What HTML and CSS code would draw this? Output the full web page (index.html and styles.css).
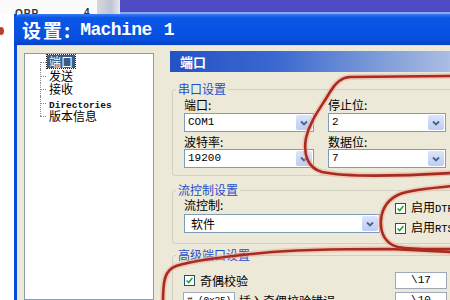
FILE: index.html
```html
<!DOCTYPE html>
<html lang="zh">
<head>
<meta charset="utf-8">
<title>设置: Machine 1</title>
<link rel="stylesheet" href="styles.css">
</head>
<body>
<div class="page">
  <div class="topstrip">
    <div class="ts-white"><span class="frag">OPP</span><span class="frag2">4</span></div>
    <div class="ts-gray"></div>
    <div class="ts-purple"></div>
  </div>
  <div class="window">
    <div class="titlebar"><span class="title-cjk">设置:</span><span class="title-lat">Machine 1</span></div>
    <div class="wbody">
      <div class="tree">
        <ul class="tree-list">
          <li><span class="node selected">端口</span></li>
          <li><span class="node">发送</span></li>
          <li><span class="node">接收</span></li>
          <li><span class="node mono">Directories</span></li>
          <li><span class="node">版本信息</span></li>
        </ul>
      </div>
      <div class="panel">
        <div class="phead">端口</div>

        <fieldset class="group g1">
          <legend>串口设置</legend>
          <div class="cols">
            <div class="col">
              <div class="lbl">端口:</div>
              <div class="combo"><span class="cval">COM1</span><span class="cbtn"><svg viewBox="0 0 10 10" width="10" height="10"><path d="M2 3.5 L5 6.5 L8 3.5" fill="none" stroke="#4d6185" stroke-width="1.8"/></svg></span></div>
              <div class="lbl lbl2">波特率:</div>
              <div class="combo"><span class="cval">19200</span><span class="cbtn"><svg viewBox="0 0 10 10" width="10" height="10"><path d="M2 3.5 L5 6.5 L8 3.5" fill="none" stroke="#4d6185" stroke-width="1.8"/></svg></span></div>
            </div>
            <div class="col">
              <div class="lbl">停止位:</div>
              <div class="combo"><span class="cval">2</span><span class="cbtn"><svg viewBox="0 0 10 10" width="10" height="10"><path d="M2 3.5 L5 6.5 L8 3.5" fill="none" stroke="#4d6185" stroke-width="1.8"/></svg></span></div>
              <div class="lbl lbl2">数据位:</div>
              <div class="combo"><span class="cval">7</span><span class="cbtn"><svg viewBox="0 0 10 10" width="10" height="10"><path d="M2 3.5 L5 6.5 L8 3.5" fill="none" stroke="#4d6185" stroke-width="1.8"/></svg></span></div>
            </div>
          </div>
        </fieldset>

        <fieldset class="group g2">
          <legend>流控制设置</legend>
          <div class="flowrow">
            <div class="flowcol">
              <div class="lbl">流控制:</div>
              <div class="combo wide"><span class="cval cjk">软件</span><span class="cbtn"><svg viewBox="0 0 10 10" width="10" height="10"><path d="M2 3.5 L5 6.5 L8 3.5" fill="none" stroke="#4d6185" stroke-width="1.8"/></svg></span></div>
            </div>
            <div class="checks">
              <div class="chk"><span class="box"><svg viewBox="0 0 11 11" width="9" height="9"><path d="M2 5.5 L4.5 8 L9 2.5" fill="none" stroke="#21a121" stroke-width="1.8"/></svg></span><span class="ctext">启用<span class="mono">DTR</span></span></div>
              <div class="chk"><span class="box"><svg viewBox="0 0 11 11" width="9" height="9"><path d="M2 5.5 L4.5 8 L9 2.5" fill="none" stroke="#21a121" stroke-width="1.8"/></svg></span><span class="ctext">启用<span class="mono">RTS</span></span></div>
            </div>
          </div>
        </fieldset>

        <fieldset class="group g3">
          <legend>高级端口设置</legend>
          <div class="adv">
            <div class="chk"><span class="box"><svg viewBox="0 0 11 11" width="9" height="9"><path d="M2 5.5 L4.5 8 L9 2.5" fill="none" stroke="#21a121" stroke-width="1.8"/></svg></span><span class="ctext">奇偶校验</span></div>
            <div class="field">\17</div>
            <div class="advleft"><div class="field small">#&nbsp;(0x25)</div><span class="ctext">插入奇偶校验错误</span></div>
            <div class="field">\10</div>
          </div>
        </fieldset>
      </div>
    </div>
  </div>

  <svg class="annot" viewBox="0 0 450 300" width="450" height="300">
    <g fill="none" stroke-linecap="round" stroke-linejoin="round">
      <g stroke="#f2b0a4" stroke-width="6" opacity="0.55">
        <path d="M452 76 L350 77 C342 77 336 82 330 92 C322 106 310 120 306 138 C303 155 308 168 322 172 C345 177 400 176 452 173"/>
        <path d="M452 186 C430 188 410 190 400 194 C388 199 382 208 381 220 C380 234 386 244 398 247 C415 250 435 249 452 249"/>
        <path d="M452 252 L390 249 C340 249 290 250 262 253 C230 256 195 260 176 266 C165 270 163 280 163 302"/>
      </g>
      <g stroke="#a52c1f" stroke-width="2.6">
        <path d="M452 76 L350 77 C342 77 336 82 330 92 C322 106 310 120 306 138 C303 155 308 168 322 172 C345 177 400 176 452 173"/>
        <path d="M452 186 C430 188 410 190 400 194 C388 199 382 208 381 220 C380 234 386 244 398 247 C415 250 435 249 452 249"/>
        <path d="M452 252 L390 249 C340 249 290 250 262 253 C230 256 195 260 176 266 C165 270 163 280 163 302"/>
      </g>
      <ellipse cx="1" cy="31" rx="3" ry="4" fill="#b8402c" stroke="none"/>
    </g>
  </svg>
</div>
</body>
</html>
```

FILE: styles.css
```css
* { box-sizing: border-box; }
html, body { margin: 0; padding: 0; }
body {
  width: 450px;
  height: 300px;
  overflow: hidden;
  background: #ffffff;
  font-family: "Noto Sans CJK SC", "Liberation Sans", sans-serif;
  font-size: 12px;
  color: #000;
}
.page {
  position: relative;
  width: 450px;
  height: 300px;
  overflow: hidden;
}
.topstrip {
  display: flex;
  height: 14px;
}
.ts-white {
  width: 97px;
  background: #fbfbfb;
  position: relative;
  overflow: hidden;
}
.frag {
  position: absolute;
  left: 15px;
  top: 9px;
  font: bold 10px/10px "Liberation Sans", sans-serif;
  color: #333;
  letter-spacing: 1px;
}
.frag2 {
  position: absolute;
  left: 84px;
  top: 8px;
  font: bold 10px/10px "Liberation Sans", sans-serif;
  color: #333;
}
.ts-gray {
  width: 23px;
  background: linear-gradient(90deg, #d8d8dc, #bfc4d4 60%, #e8e8ec);
}
.ts-purple {
  flex: 1;
  background: #5049c4;
  border-bottom: 2px solid #8aa6ec;
}
.window {
  margin-left: 14px;
  width: 460px;
  border-left: 3px solid #0a4ad8;
}
.titlebar {
  height: 31px;
  margin-left: -3px;
  padding-left: 8px;
  border-top-left-radius: 7px;
  background: linear-gradient(180deg, #3b7cf2 0, #0a56e6 12%, #0650e0 80%, #0440c6 100%);
  color: #fff;
  display: flex;
  align-items: center;
  font-weight: bold;
  font-size: 19px;
  white-space: nowrap;
}
.title-cjk {
  font-family: "Noto Sans CJK SC", sans-serif;
  letter-spacing: 2px;
  margin-right: 8px;
}
.title-lat {
  font-family: "Liberation Mono", monospace;
  font-size: 18px;
  letter-spacing: -0.6px;
  word-spacing: 2px;
}
.wbody {
  height: 255px;
  background: #ece9d8;
  display: flex;
  gap: 16px;
  padding: 5px 0 0 7px;
  border-top: 1px solid #d8dff0;
}
.tree {
  width: 130px;
  flex: none;
  margin-top: 2px;
  background: #fff;
  border: 1px solid #8d9aa8;
}
.tree-list {
  list-style: none;
  margin: 1px 0 0 15px;
  padding: 0;
}
.tree-list li {
  position: relative;
  height: 13.5px;
  line-height: 13px;
  padding-left: 7px;
}
.tree-list li::before {
  content: "";
  position: absolute;
  left: 0;
  top: 7px;
  width: 6px;
  border-top: 1px dotted #8a8a8a;
}
.tree-list li::after {
  content: "";
  position: absolute;
  left: 0;
  top: 0;
  height: 14px;
  border-left: 1px dotted #8a8a8a;
}
.tree-list li:first-child::after { top: 7px; height: 7px; }
.tree-list li:last-child::after { height: 7px; }
.node {
  display: inline-block;
  padding: 0 2px;
  font-size: 12px;
  line-height: 13px;
}
.node.selected {
  background: #3c5a86;
  color: #fff;
  outline: 1px dotted #222;
}
.mono {
  font-family: "Liberation Mono", "DejaVu Sans Mono", monospace;
}
.node.mono {
  font-size: 9.5px;
  font-weight: bold;
  color: #111;
}
.panel {
  width: 300px;
  flex: none;
}
.phead {
  height: 21px;
  background: linear-gradient(90deg, #2452c4 0, #3a68d0 35%, #7e9cd8 70%, #b7c7e6 100%);
  color: #fff;
  font-weight: bold;
  font-size: 13px;
  line-height: 21px;
  padding-left: 10px;
}
.group {
  margin: 0 0 0 2px;
  border: 1px solid #d3d0c0;
  border-radius: 3px;
  padding: 2px 0 7px 11px;
  min-width: 0;
}
.group legend {
  padding: 0 2px;
  margin-left: -8px;
  color: #1f4fc6;
  font-size: 12px;
  line-height: 14px;
}
.g1 { margin-top: 10px; }
.g2 { margin-top: 7px; padding-top: 1px; padding-bottom: 8px; }
.g3 { margin-top: 4px; padding-top: 10px; padding-bottom: 20px; }
.cols {
  display: grid;
  grid-template-columns: 130px 118px;
  column-gap: 14px;
}
.lbl {
  line-height: 14px;
  height: 14px;
  font-size: 12px;
  margin-bottom: 1px;
}
.lbl2 { margin-top: 3px; margin-bottom: 0; }
.combo {
  height: 19px;
  background: #fff;
  border: 1px solid #7f9db9;
  display: flex;
  align-items: stretch;
}
.cval {
  flex: 1;
  font-family: "Liberation Mono", monospace;
  font-size: 11px;
  line-height: 17px;
  padding-left: 3px;
}
.cval.cjk {
  font-family: "Noto Sans CJK SC", sans-serif;
  font-size: 12px;
  padding-left: 6px;
}
.cbtn {
  width: 16px;
  margin: 1px;
  background: linear-gradient(180deg, #dbe5fb, #bccdf4);
  border-radius: 2px;
  display: flex;
  align-items: center;
  justify-content: center;
}
.g2 .lbl { margin-bottom: 2px; }
.flowrow {
  display: flex;
  gap: 15px;
}
.flowcol { width: 196px; flex: none; }
.checks {
  padding-top: 3px;
  display: flex;
  flex-direction: column;
  gap: 6px;
}
.chk {
  display: flex;
  align-items: center;
  gap: 5px;
  height: 14px;
  white-space: nowrap;
}
.box {
  width: 11px;
  height: 11px;
  flex: none;
  background: #fff;
  border: 1px solid #1c5180;
  display: flex;
  align-items: center;
  justify-content: center;
}
.ctext {
  font-size: 12px;
  line-height: 14px;
}
.ctext .mono { font-size: 10.5px; }
.adv {
  display: grid;
  grid-template-columns: 211px 52px;
  row-gap: 3px;
  align-items: center;
}
.field {
  height: 17px;
  width: 52px;
  flex: none;
  background: #fff;
  border: 1px solid #9fa9b8;
  font-family: "Liberation Mono", monospace;
  font-size: 11px;
  line-height: 15px;
  text-align: center;
  white-space: nowrap;
  overflow: hidden;
}
.field.small {
  font-size: 9.5px;
  letter-spacing: -0.2px;
}
.advleft {
  display: flex;
  align-items: center;
  gap: 4px;
  margin-left: -1px;
}
.annot {
  position: absolute;
  left: 0;
  top: 0;
  pointer-events: none;
}
```
